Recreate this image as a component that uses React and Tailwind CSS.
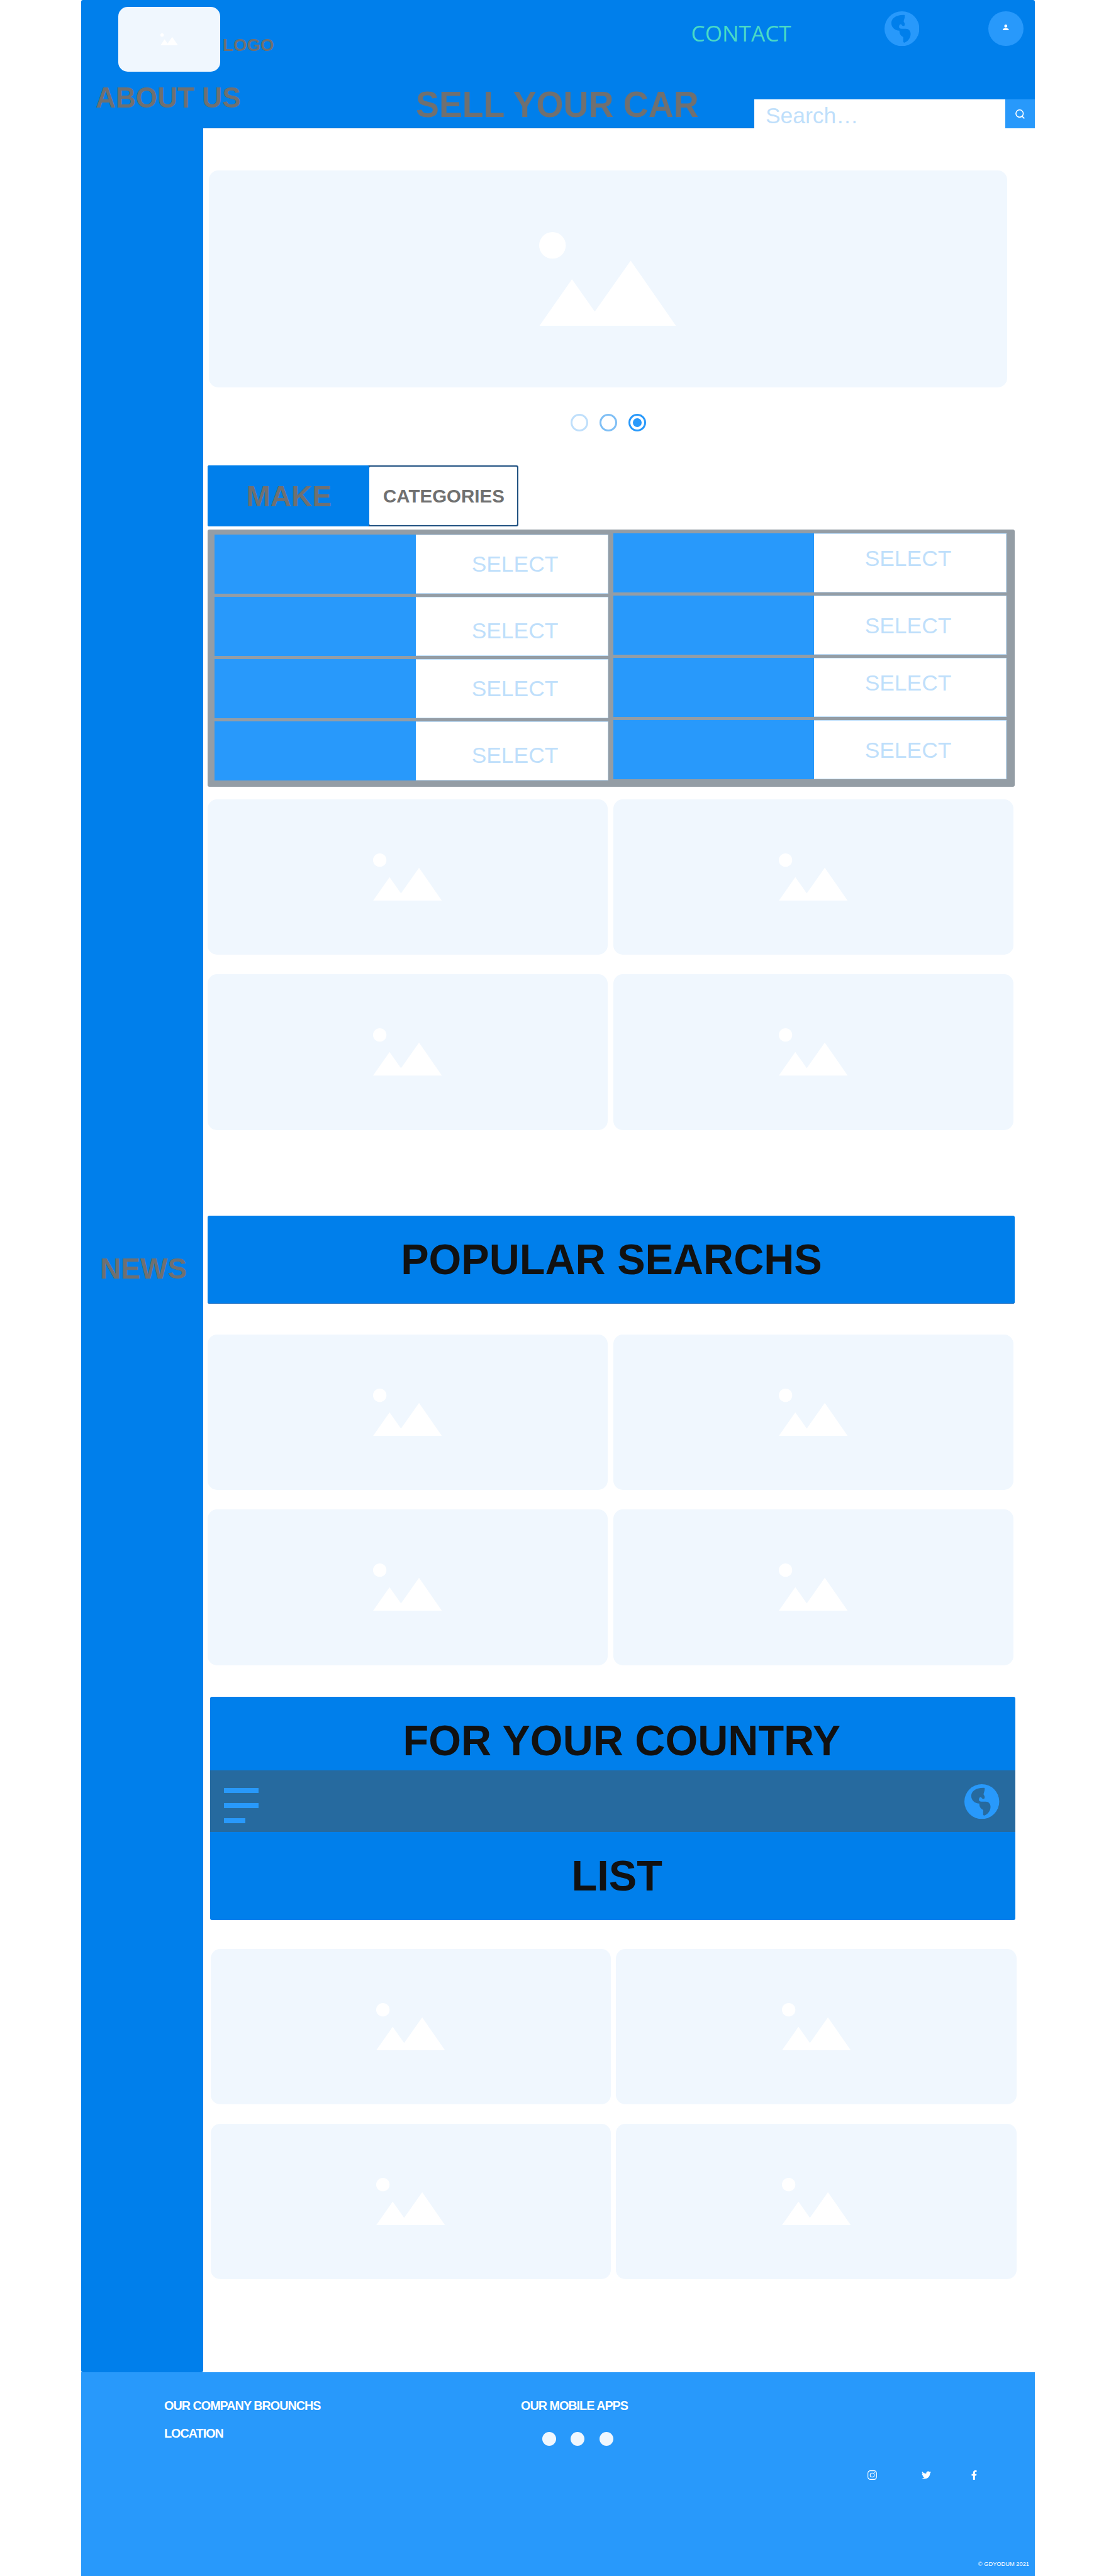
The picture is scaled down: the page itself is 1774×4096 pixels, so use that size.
import React from "react";
import { FaTwitter, FaFacebookF } from "react-icons/fa";

function ImageGlyph({ className }) {
  return (
    <svg viewBox="0 0 355 244" className={className} fill="#ffffff">
      <circle cx="34.5" cy="34.5" r="34.5" />
      <path d="M0 244L85 122L144 206L237 74L355 244Z" />
    </svg>
  );
}

function Globe() {
  return (
    <svg viewBox="0 0 60 60" className="h-[55.4px] w-[55.4px] shrink-0">
      <circle cx="30" cy="30" r="30" fill="#2899fb" />
      <path
        className="fill-(--land)"
        d="M33.5 6.3C20 6 11.8 12 11.8 20C11.8 28 18 33 25.7 33.3C25.7 39 28 42 32.3 44.3V52C32.3 53.8 33.8 54.2 35.2 53.6C41 51.5 45 45 45 39C45 33.5 41.5 30 37 30H29.6C26.5 30 25 28.8 25 27.2C25 24.5 26.2 22.3 28 22.3C29.8 22.3 29.8 25.3 32.3 25.3C34.8 25.3 35.2 23.5 34.8 21C34.5 19 33 18.6 33 17.2C33 15.5 35 12 35 8C35 6.8 34.6 6.3 33.5 6.3Z"
      />
    </svg>
  );
}

function CardGrid({ className }) {
  return (
    <div className={"grid h-[525.5px] w-[1281px] grid-cols-2 grid-rows-2 gap-x-[8.5px] gap-y-[31px] " + className}>
      {[0, 1, 2, 3].map((i) => (
        <div key={i} className="flex items-center justify-center rounded-[15px] bg-[#f0f7fe]">
          <ImageGlyph className="w-[109.5px]" />
        </div>
      ))}
    </div>
  );
}

function SelectColumn({ className, cellClass, labelClasses }) {
  return (
    <div className={"grid h-[391px] grid-rows-4 gap-[4.6px] " + className}>
      {labelClasses.map((labelClass, i) => (
        <div key={i} className="flex">
          <div className="flex-1 bg-[#2899fb]" />
          <div className={"flex items-center justify-center border border-l-0 border-[#bfdffb] bg-white " + cellClass}>
            <span className={"text-[35.4px] leading-none text-[#bfdffb] " + labelClass}>SELECT</span>
          </div>
        </div>
      ))}
    </div>
  );
}

function Header() {
  return (
    <header className="flex h-[204px] flex-col rounded-t-[3px] bg-[#007feb] shadow-[inset_0_-1px_0_#1b6fc4]">
      <div className="flex h-[114px] items-start">
        <div className="mt-[11px] ml-[59px] flex h-[103px] w-[162px] shrink-0 items-center justify-center rounded-[15px] bg-[#f0f7fe]">
          <ImageGlyph className="w-[28px]" />
        </div>
        <div className="mt-[56px] ml-[3.5px] w-[90px] shrink-0 origin-left scale-x-[0.97] text-[28.5px] leading-[30px] font-bold text-[#707070]">LOGO</div>
        <div className="mt-[32px] ml-[655px] w-[165px] shrink-0 font-['Open_Sans',sans-serif] text-[35.2px] leading-[40px] text-[#4adac6]">CONTACT</div>
        <div className="mt-[17.6px] ml-[142.3px] shrink-0 [--land:#007feb]">
          <Globe />
        </div>
        <div className="mt-[17.6px] ml-[110px] flex h-[55.4px] w-[55.4px] shrink-0 items-center justify-center rounded-full bg-[#2899fb]">
          <svg viewBox="0 0 10 10" className="mb-[4px] h-[9.5px] w-[9.5px]" fill="#ffffff">
            <circle cx="5" cy="2.5" r="2.5" />
            <path d="M0 10V8.5C0 7 1.5 6 5 6S10 7 10 8.5V10Z" />
          </svg>
        </div>
      </div>
      <div className="flex h-[90px] items-start">
        <div className="mt-[16px] ml-[23px] w-[240px] shrink-0 origin-left scale-x-[0.95] text-[46.5px] leading-[50px] font-bold whitespace-nowrap text-[#707070]">ABOUT US</div>
        <div className="mt-[22px] ml-[269px] w-[470px] shrink-0 origin-left scale-x-[0.97] text-[57px] leading-[60px] font-bold whitespace-nowrap text-[#707070]">SELL YOUR CAR</div>
        <div className="mt-[44px] ml-[68px] flex h-[46px] w-[399px] shrink-0 items-center bg-white pt-[7px] pl-[18px] text-[35.4px] leading-none text-[#bfdffb]">Search…</div>
        <div className="mt-[44px] flex h-[46px] flex-1 items-center justify-center bg-[#2899fb]">
          <svg viewBox="0 0 16 16" className="h-[15px] w-[15px]" fill="none" stroke="#ffffff" strokeWidth="1.7">
            <circle cx="7.2" cy="7" r="6.2" />
            <path d="M10.8 11L15.3 15.4" />
          </svg>
        </div>
      </div>
    </header>
  );
}

function Footer() {
  return (
    <footer className="flex h-[324px] bg-[#2899fb] font-bold text-white">
      <div className="w-[567px] pt-[42px] pl-[132px] text-[19.8px] leading-[22px] tracking-[-1px]">
        <div>OUR COMPANY BROUNCHS</div>
        <div className="mt-[21.5px]">LOCATION</div>
      </div>
      <div className="w-[600px] pt-[42px] pl-[132px]">
        <div className="text-[19.8px] leading-[22px] tracking-[-1px]">OUR MOBILE APPS</div>
        <div className="mt-[31px] ml-[34px] flex gap-[23.3px]">
          <span className="h-[22px] w-[22px] rounded-full bg-[#f0f7fe]" />
          <span className="h-[22px] w-[22px] rounded-full bg-[#f0f7fe]" />
          <span className="h-[22px] w-[22px] rounded-full bg-[#f0f7fe]" />
        </div>
      </div>
      <div className="flex flex-1 flex-col">
        <div className="mt-[156px] ml-[83px] flex items-center">
          <svg viewBox="0 0 16 16" className="h-[15px] w-[15px]" fill="none" stroke="#ffffff" strokeWidth="1.2">
            <rect x="0.7" y="0.7" width="14.6" height="14.6" rx="4" />
            <circle cx="8" cy="8" r="3.5" />
            <circle cx="12.2" cy="3.8" r="0.5" fill="#ffffff" strokeWidth="0.6" />
          </svg>
          <FaTwitter className="ml-[71px] h-[15px] w-[15px]" />
          <FaFacebookF className="ml-[61px] h-[15px] w-[15px]" />
        </div>
        <div className="mt-auto mr-[9px] mb-[13.5px] text-right text-[9.3px] leading-[11px] font-normal">© GDYODUM 2021</div>
      </div>
    </footer>
  );
}

export default function App() {
  return (
    <div className="min-h-[4096px] bg-white pl-[129px] font-['Liberation_Sans',Arial,sans-serif]">
      <div className="flex h-[4096px] w-[1516px] flex-col">
        <Header />
        <div className="flex h-[3568px]">
          <aside className="-mt-px w-[194px] shrink-0 rounded-b-[3px] bg-[#007feb] pt-[1789px]">
            <div className="ml-[29.7px] w-[150px] origin-left scale-x-[0.98] text-[47px] leading-[50px] font-bold text-[#707070]">NEWS</div>
          </aside>
          <main className="flex flex-1 flex-col items-start">
            <section className="mt-[67px] ml-[8.5px] flex h-[345px] w-[1269px] items-center justify-center rounded-[15px] bg-[#f0f7fe]">
              <ImageGlyph className="w-[218px]" />
            </section>
            <div className="mt-[42px] ml-[583.5px] flex gap-[18.3px]">
              <span className="h-[28px] w-[28px] rounded-full border-[3px] border-[#bfdffb]" />
              <span className="h-[28px] w-[28px] rounded-full border-[3px] border-[#7fbff5]" />
              <span className="flex h-[28px] w-[28px] items-center justify-center rounded-full border-[3px] border-[#2899fb]">
                <span className="h-[14px] w-[14px] rounded-full bg-[#2899fb]" />
              </span>
            </div>
            <div className="mt-[54px] ml-[7px] flex h-[97px] w-[494px] rounded-[3px] bg-[#1f5080] font-bold text-[#707070]">
              <div className="flex w-[257px] items-center justify-center rounded-[3px] bg-[#007feb] pl-[2px]">
                <span className="scale-x-[0.98] text-[47px] leading-none">MAKE</span>
              </div>
              <div className="my-[2px] mr-[2px] flex flex-1 items-center justify-center rounded-[2px] bg-white pl-[2px]">
                <span className="text-[29.5px] leading-none">CATEGORIES</span>
              </div>
            </div>
            <section className="mt-[5px] ml-[7px] flex h-[409px] w-[1283px] rounded-[3px] bg-[#949da5] pl-[11px]">
              <SelectColumn
                className="mt-[8px] w-[626px]"
                cellClass="w-[306px] pl-[10px]"
                labelClasses={["mt-px", "mt-[16px]", "mt-px", "mt-[16px]"]}
              />
              <SelectColumn
                className="mt-[6px] ml-[8px] w-[625px]"
                cellClass="w-[306px] pr-[6px]"
                labelClasses={["mb-[12px]", "mt-[4px]", "mb-[12px]", "mt-[4px]"]}
              />
            </section>
            <CardGrid className="mt-[20px] ml-[7px]" />
            <section className="mt-[136px] ml-[7px] flex h-[140px] w-[1283px] items-center justify-center rounded-[3px] bg-[#007feb] shadow-[inset_0_-1px_0_#1b6fc4]">
              <h2 className="scale-x-[0.965] text-[69px] leading-none font-bold whitespace-nowrap text-[#111111]">POPULAR SEARCHS</h2>
            </section>
            <CardGrid className="mt-[49.5px] ml-[7px]" />
            <section className="mt-[50px] ml-[10.5px] w-[1280px] overflow-hidden rounded-[3px] bg-[#007feb]">
              <div className="flex h-[117px] items-center justify-center pt-[22px] pl-[29px]">
                <h2 className="scale-x-[0.965] text-[69px] leading-none font-bold whitespace-nowrap text-[#111111]">FOR YOUR COUNTRY</h2>
              </div>
              <div className="flex h-[98px] items-start justify-between bg-[#266a9f] pt-[22px] pr-[25px] pl-[22px] [--land:#266a9f]">
                <div className="mt-[6px] flex flex-col gap-[16px]">
                  <span className="h-[8px] w-[55px] bg-[#2899fb]" />
                  <span className="h-[8px] w-[55px] bg-[#2899fb]" />
                  <span className="h-[8px] w-[34px] bg-[#2899fb]" />
                </div>
                <Globe />
              </div>
              <div className="flex h-[140px] items-center justify-center pl-[15px]">
                <h2 className="scale-x-[0.965] text-[69px] leading-none font-bold text-[#111111]">LIST</h2>
              </div>
            </section>
            <CardGrid className="mt-[46px] ml-[11.5px]" />
          </main>
        </div>
        <Footer />
      </div>
    </div>
  );
}
